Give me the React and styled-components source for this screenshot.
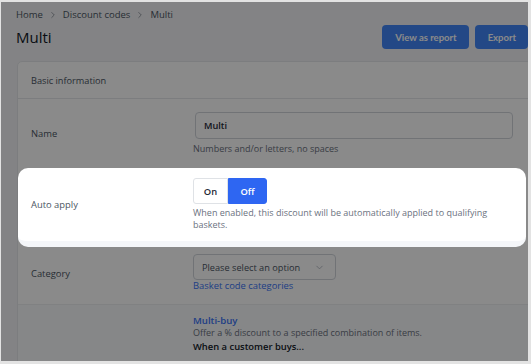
import React from "react";
import styled, { createGlobalStyle } from "styled-components";
import { ChevronRight, ChevronDown } from "lucide-react";

const GlobalStyle = createGlobalStyle`
    html, body {
        margin: 0;
        padding: 0;
    }
    body {
        background: #e3e3e3;
        font-family: "Open Sans", "Noto Sans", sans-serif;
    }
`;

function App() {
    return (
        <>
            <GlobalStyle />
            <Frame>
                <Page>
                    <Breadcrumb>
                        <span>Home</span>
                        <ChevronRight size={10} strokeWidth={1.6} />
                        <span>Discount codes</span>
                        <ChevronRight size={10} strokeWidth={1.6} />
                        <span>Multi</span>
                    </Breadcrumb>
                    <HeaderRow>
                        <Title>Multi</Title>
                        <Actions>
                            <Button>View as report</Button>
                            <Button>Export</Button>
                        </Actions>
                    </HeaderRow>
                    <Card>
                        <CardHeader>Basic information</CardHeader>
                        <Row>
                            <Label>Name</Label>
                            <Field>
                                <Input>Multi</Input>
                                <Hint>Numbers and/or letters, no spaces</Hint>
                            </Field>
                        </Row>
                        <Spotlight>
                            <Label>Auto apply</Label>
                            <Field>
                                <Toggle>
                                    <Segment>On</Segment>
                                    <Segment active>Off</Segment>
                                </Toggle>
                                <Hint $top={3}>
                                    When enabled, this discount will be automatically applied to
                                    qualifying baskets.
                                </Hint>
                            </Field>
                        </Spotlight>
                        <Row $top={7} $bottom={12}>
                            <Label>Category</Label>
                            <Field>
                                <Select>
                                    <span>Please select an option</span>
                                    <ChevronDown size={11} strokeWidth={1.5} color="#9ca3af" />
                                </Select>
                                <Link>Basket code categories</Link>
                            </Field>
                        </Row>
                        <TypeSection>
                            <Field>
                                <TypeTitle>Multi-buy</TypeTitle>
                                <Hint $top={0}>
                                    Offer a % discount to a specified combination of items.
                                </Hint>
                                <Strong>When a customer buys...</Strong>
                            </Field>
                        </TypeSection>
                    </Card>
                </Page>
                <Backdrop />
            </Frame>
        </>
    );
}

export default App;

const Frame = styled.div`
    position: relative;
    margin: 2px 3px 3px 1px;
    height: 359px;
    overflow: hidden;
    background: #f2f3f5;
`;
const Backdrop = styled.div`
    position: absolute;
    inset: 0;
    background: rgba(0, 0, 0, 0.46);
    z-index: 5;
`;
const Page = styled.div`
    padding: 7px 0 0 15px;
`;
const Breadcrumb = styled.div`
    display: flex;
    align-items: center;
    gap: 5px;
    font-size: 9.5px;
    line-height: 12px;
    color: #4b5563;
    svg {
        color: #6b7280;
    }
`;
const HeaderRow = styled.div`
    display: flex;
    align-items: center;
    justify-content: space-between;
    margin-top: 4px;
    height: 24px;
`;
const Title = styled.h1`
    margin: 0;
    font-size: 15px;
    font-weight: 400;
    color: #111827;
`;
const Actions = styled.div`
    display: flex;
    gap: 6px;
`;
const Button = styled.button`
    height: 24px;
    padding: 0 12px 0 13px;
    border: none;
    border-radius: 4px;
    background: #4185f7;
    color: #fff;
    font-family: "Lato", sans-serif;
    font-weight: 700;
    font-size: 9.5px;
`;
const Card = styled.div`
    margin: 12px -4px 0 1px;
    background: #fff;
    border: 1px solid #e6e8eb;
    border-radius: 5px 5px 0 0;
`;
const CardHeader = styled.div`
    height: 36px;
    display: flex;
    align-items: center;
    padding-left: 13px;
    font-size: 9.2px;
    color: #4b5563;
    border-bottom: 1px solid #e6e8eb;
`;
const Row = styled.div`
    display: grid;
    grid-template-columns: 162px 1fr;
    align-items: center;
    padding: ${(p) => p.$top ?? 13}px 15px ${(p) => p.$bottom ?? 12}px 13px;
`;
const Spotlight = styled(Row)`
    position: relative;
    z-index: 10;
    margin: 1px 5px 0 0;
    padding: 10px 15px 10px 13px;
    border-radius: 10px;
    background: #fff;
    border-bottom: 6px solid #f4f6f9;
`;
const Label = styled.div`
    font-size: 9.4px;
    color: #4b5563;
`;
const Field = styled.div`
    display: flex;
    flex-direction: column;
    align-items: flex-start;
`;
const Input = styled.div`
    box-sizing: border-box;
    width: 318px;
    height: 27px;
    margin-left: 2px;
    padding: 0 8px;
    display: flex;
    align-items: center;
    border: 1px solid #d1d5db;
    border-radius: 4px;
    font-size: 9.2px;
    font-weight: 600;
    color: #1f2937;
    background: #fff;
`;
const Hint = styled.div`
    margin-top: ${(p) => p.$top ?? 4}px;
    max-width: 318px;
    font-size: 9px;
    line-height: 12px;
    color: #6b7280;
`;
const Toggle = styled.div`
    display: flex;
    height: 26px;
`;
const Segment = styled.div`
    display: flex;
    align-items: center;
    justify-content: center;
    box-sizing: border-box;
    width: ${(p) => (p.active ? 39 : 35)}px;
    font-size: 9.4px;
    font-weight: 600;
    color: ${(p) => (p.active ? "#fff" : "#1f2937")};
    background: ${(p) => (p.active ? "#2e66f2" : "#fff")};
    border: 1px solid ${(p) => (p.active ? "#2e66f2" : "#dfe2e6")};
    border-radius: ${(p) => (p.active ? "0 3px 3px 0" : "3px 0 0 3px")};
`;
const Select = styled.div`
    box-sizing: border-box;
    width: 143px;
    height: 26px;
    display: flex;
    align-items: center;
    justify-content: space-between;
    padding: 0 10px 0 8px;
    border: 1px solid #d1d5db;
    border-radius: 4px;
    font-size: 9.2px;
    color: #4b5563;
`;
const Link = styled.a`
    font-size: 9.4px;
    line-height: 12px;
    color: #3a74f5;
`;
const TypeSection = styled.div`
    padding: 9px 15px 14px 175px;
    background: #f8f9fb;
    border-top: 1px solid #eceef1;
`;
const TypeTitle = styled.div`
    font-size: 9.6px;
    line-height: 13px;
    font-weight: 600;
    color: #3a74f5;
`;
const Strong = styled.div`
    margin-top: 1px;
    font-size: 9.4px;
    line-height: 13px;
    font-weight: 600;
    color: #111827;
`;
